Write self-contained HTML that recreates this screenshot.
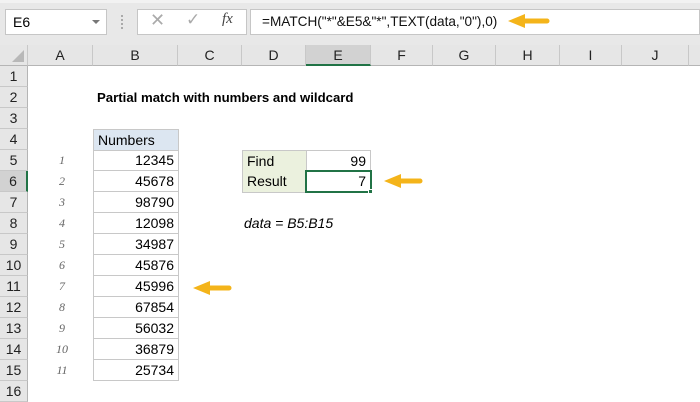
<!DOCTYPE html>
<html><head><meta charset="utf-8"><style>
*{margin:0;padding:0;box-sizing:border-box}
body{width:700px;height:400px;overflow:hidden;background:#fff;font-family:"Liberation Sans",sans-serif;position:relative}
.a{position:absolute}
.top{left:0;top:0;width:700px;height:45px;background:#e8e8e8;border-top:3px solid #f2f2f2}
.box{background:#fff;border:1px solid #c6c6c6}
.ch{top:45px;height:21px;background:#e6e6e6;border-right:1px solid #c8c8c8;border-bottom:1px solid #b5b5b5;font-size:14px;color:#222;text-align:center;line-height:21px}
.rh{left:0;width:28px;height:21px;background:#e6e6e6;border-bottom:1px solid #c8c8c8;border-right:1px solid #b5b5b5;font-size:14px;color:#222;text-align:center;line-height:21px}
.c{height:21px;font-size:14px;line-height:21px;color:#000;padding:0 4px}
.n{left:93px;width:86px;text-align:right;border:1px solid #c8c8c8;border-top:none}
.idx{left:40px;width:44px;text-align:center;font-family:"Liberation Serif",serif;font-style:italic;font-size:12px;color:#666;height:21px;line-height:21px}
</style></head><body>
<div class="a top"></div>
<div class="a box" style="left:5px;top:9px;width:102px;height:26px;font-size:14px;line-height:24px;padding-left:7px">E6</div>
<div class="a" style="left:92px;top:20px;width:0;height:0;border-left:4px solid transparent;border-right:4px solid transparent;border-top:4px solid #777"></div>
<div class="a" style="left:121px;top:15px;width:2px;height:14px;border-left:2px dotted #aaa"></div>
<div class="a box" style="left:137px;top:9px;width:110px;height:26px"></div>
<div class="a" style="left:150px;top:10px;font-size:18px;color:#aaa">✕</div>
<div class="a" style="left:186px;top:10px;font-size:17px;color:#aaa">✓</div>
<div class="a" style="left:222px;top:11px;font-size:15px;font-family:'Liberation Serif',serif;font-style:italic;color:#444">fx</div>
<div class="a box" style="left:250px;top:9px;width:450px;height:26px;font-size:13.6px;line-height:24px;padding-left:11px;color:#111">=MATCH("*"&amp;E5&amp;"*",TEXT(data,"0"),0)</div>
<svg class="a" style="left:505px;top:13px" width="45" height="16"><path d="M42 8H20" stroke="#f4b41a" stroke-width="5" stroke-linecap="round"/><path d="M3 8L20 1V15Z" fill="#f4b41a"/></svg>

<div class="a ch" style="left:0;width:28px"></div>
<div class="a" style="left:12px;top:50px;width:0;height:0;border-left:12px solid transparent;border-bottom:12px solid #b8b8b8"></div>
<div class="a ch" style="left:28px;width:65px">A</div>
<div class="a ch" style="left:93px;width:85px">B</div>
<div class="a ch" style="left:178px;width:64px">C</div>
<div class="a ch" style="left:242px;width:64px">D</div>
<div class="a ch" style="left:306px;width:65px;background:#d2d2d2;border-bottom:2px solid #217346">E</div>
<div class="a ch" style="left:371px;width:62px">F</div>
<div class="a ch" style="left:433px;width:63px">G</div>
<div class="a ch" style="left:496px;width:64px">H</div>
<div class="a ch" style="left:560px;width:62px">I</div>
<div class="a ch" style="left:622px;width:67px">J</div>
<div class="a ch" style="left:689px;width:20px"></div>

<div class="a rh" style="top:66px">1</div>
<div class="a rh" style="top:87px">2</div>
<div class="a rh" style="top:108px">3</div>
<div class="a rh" style="top:129px">4</div>
<div class="a rh" style="top:150px">5</div>
<div class="a rh" style="top:171px;background:#d2d2d2;border-right:2px solid #217346">6</div>
<div class="a rh" style="top:192px">7</div>
<div class="a rh" style="top:213px">8</div>
<div class="a rh" style="top:234px">9</div>
<div class="a rh" style="top:255px">10</div>
<div class="a rh" style="top:276px">11</div>
<div class="a rh" style="top:297px">12</div>
<div class="a rh" style="top:318px">13</div>
<div class="a rh" style="top:339px">14</div>
<div class="a rh" style="top:360px">15</div>
<div class="a rh" style="top:381px">16</div>

<div class="a c" style="left:93px;top:87px;font-weight:bold;font-size:13.2px;white-space:nowrap">Partial match with numbers and wildcard</div>
<div class="a c" style="left:93px;top:129px;width:86px;height:22px;background:#dce6f1;border:1px solid #c8c8c8">Numbers</div>
<div class="a c n" style="top:150px">12345</div>
<div class="a c n" style="top:171px">45678</div>
<div class="a c n" style="top:192px">98790</div>
<div class="a c n" style="top:213px">12098</div>
<div class="a c n" style="top:234px">34987</div>
<div class="a c n" style="top:255px">45876</div>
<div class="a c n" style="top:276px">45996</div>
<div class="a c n" style="top:297px">67854</div>
<div class="a c n" style="top:318px">56032</div>
<div class="a c n" style="top:339px">36879</div>
<div class="a c n" style="top:360px">25734</div>

<div class="a idx" style="top:150px">1</div>
<div class="a idx" style="top:171px">2</div>
<div class="a idx" style="top:192px">3</div>
<div class="a idx" style="top:213px">4</div>
<div class="a idx" style="top:234px">5</div>
<div class="a idx" style="top:255px">6</div>
<div class="a idx" style="top:276px">7</div>
<div class="a idx" style="top:297px">8</div>
<div class="a idx" style="top:318px">9</div>
<div class="a idx" style="top:339px">10</div>
<div class="a idx" style="top:360px">11</div>

<div class="a c" style="left:242px;top:150px;width:65px;height:22px;background:#ebf1de;border:1px solid #c8c8c8">Find</div>
<div class="a c" style="left:306px;top:150px;width:65px;height:22px;border:1px solid #c8c8c8;border-left:none;text-align:right">99</div>
<div class="a c" style="left:242px;top:171px;width:65px;height:22px;background:#ebf1de;border:1px solid #c8c8c8;border-top:none">Result</div>
<div class="a c" style="left:305px;top:170px;width:67px;height:23px;border:2px solid #217346;text-align:right;line-height:19px">7</div>
<div class="a" style="left:368px;top:189px;width:5px;height:5px;background:#217346;border:1px solid #fff"></div>
<svg class="a" style="left:381px;top:173px" width="42" height="16"><path d="M39 8H20" stroke="#f4b41a" stroke-width="5" stroke-linecap="round"/><path d="M3 8L20 1V15Z" fill="#f4b41a"/></svg>
<div class="a c" style="left:240px;top:213px;font-style:italic;white-space:nowrap">data = B5:B15</div>
<svg class="a" style="left:190px;top:280px" width="42" height="16"><path d="M39 8H20" stroke="#f4b41a" stroke-width="5" stroke-linecap="round"/><path d="M3 8L20 1V15Z" fill="#f4b41a"/></svg>
</body></html>
